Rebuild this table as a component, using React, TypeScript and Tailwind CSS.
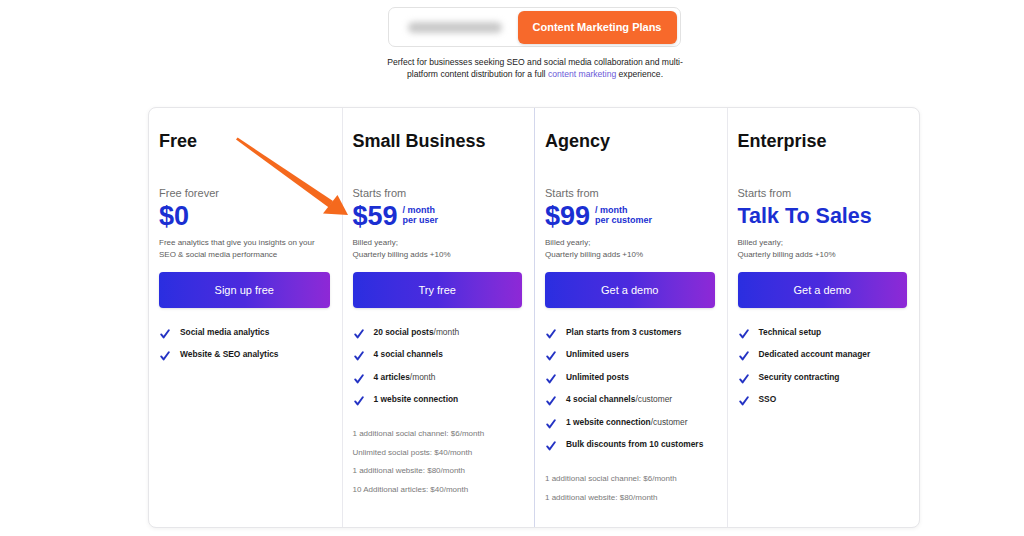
import React from "react";

const Check = () => (
  <svg width="10" height="10" viewBox="0 0 10 10" className="mt-[3px] shrink-0">
    <path d="M1.2 5.4 L3.6 8.4 L8.8 1.2" fill="none" stroke="#2433c4" strokeWidth="1.9" strokeLinecap="round" strokeLinejoin="round" />
  </svg>
);

type Feat = { b: string; n?: string };

type Plan = {
  name: string;
  label: string;
  price: React.ReactNode;
  note: React.ReactNode;
  cta: string;
  features: Feat[];
  extras?: string[];
};

const Billed = (
  <>
    Billed yearly;
    <br />
    Quarterly billing adds +10%
  </>
);

const plans: Plan[] = [
  {
    name: "Free",
    label: "Free forever",
    price: <span className="text-[27px] font-bold leading-[28px] text-[#1b2fd2]">$0</span>,
    note: (
      <>
        Free analytics that give you insights on your
        <br />
        SEO &amp; social media performance
      </>
    ),
    cta: "Sign up free",
    features: [{ b: "Social media analytics" }, { b: "Website & SEO analytics" }],
  },
  {
    name: "Small Business",
    label: "Starts from",
    price: (
      <div className="flex items-center gap-[5px]">
        <span className="text-[27px] font-bold leading-[28px] text-[#1b2fd2]">$59</span>
        <span className="text-[9px] font-bold leading-[10px] text-[#1b2fd2] mt-[-2px]">
          / month
          <br />
          per user
        </span>
      </div>
    ),
    note: Billed,
    cta: "Try free",
    features: [
      { b: "20 social posts", n: "/month" },
      { b: "4 social channels" },
      { b: "4 articles", n: "/month" },
      { b: "1 website connection" },
    ],
    extras: [
      "1 additional social channel: $6/month",
      "Unlimited social posts: $40/month",
      "1 additional website: $80/month",
      "10 Additional articles: $40/month",
    ],
  },
  {
    name: "Agency",
    label: "Starts from",
    price: (
      <div className="flex items-center gap-[5px]">
        <span className="text-[27px] font-bold leading-[28px] text-[#1b2fd2]">$99</span>
        <span className="text-[9px] font-bold leading-[10px] text-[#1b2fd2] mt-[-2px]">
          / month
          <br />
          per customer
        </span>
      </div>
    ),
    note: Billed,
    cta: "Get a demo",
    features: [
      { b: "Plan starts from 3 customers" },
      { b: "Unlimited users" },
      { b: "Unlimited posts" },
      { b: "4 social channels", n: "/customer" },
      { b: "1 website connection", n: "/customer" },
      { b: "Bulk discounts from 10 customers" },
    ],
    extras: ["1 additional social channel: $6/month", "1 additional website: $80/month"],
  },
  {
    name: "Enterprise",
    label: "Starts from",
    price: <span className="text-[21.5px] font-bold leading-[28px] text-[#1b2fd2]">Talk To Sales</span>,
    note: Billed,
    cta: "Get a demo",
    features: [
      { b: "Technical setup" },
      { b: "Dedicated account manager" },
      { b: "Security contracting" },
      { b: "SSO" },
    ],
  },
];

function Column({ p, idx }: { p: Plan; idx: number }) {
  const borderCls =
    idx === 0 ? "" : idx === 2 ? "border-l border-[#d3d7ec]" : "border-l border-[#e9e9ee]";
  return (
    <div className={`flex flex-col pl-[10px] pr-[12px] ${borderCls}`}>
      <div className="pt-[22px] text-[18px] font-bold leading-[22px] text-[#111]">{p.name}</div>
      <div className="mt-[35px] text-[11px] leading-[13px] text-[#6e6e6e]">{p.label}</div>
      <div className="mt-[2px] h-[28px] flex items-center">{p.price}</div>
      <div className="mt-[7px] text-[8px] leading-[12px] text-[#5c5c5c]">{p.note}</div>
      <button className="mt-[11px] h-[36px] w-full rounded-[4px] bg-linear-to-r from-[#2a2ee0] via-[#4c2ade] to-[#8e28d6] text-[11px] text-white shadow-sm">
        {p.cta}
      </button>
      <div className="mt-[18px] flex flex-col gap-[9.4px]">
        {p.features.map((f, i) => (
          <div key={i} className="flex items-start gap-[10px] pl-[1px]">
            <Check />
            <span className="text-[8.4px] leading-[12px] text-[#1a1a1a]">
              <span className="font-bold">{f.b}</span>
              {f.n && <span className="font-normal text-[#444]">{f.n}</span>}
            </span>
          </div>
        ))}
      </div>
      {p.extras && (
        <div className="mt-[22px] flex flex-col gap-[6.6px]">
          {p.extras.map((e, i) => (
            <div key={i} className="text-[8px] leading-[12px] text-[#7a7a7a]">
              {e}
            </div>
          ))}
        </div>
      )}
    </div>
  );
}

export default function App() {
  return (
    <div
      className="relative w-[1024px] h-[536px] bg-white overflow-hidden"
      style={{ fontFamily: '"Liberation Sans", Arial, Helvetica, sans-serif' }}
    >
      <div className="ml-[148px] w-[772px] pt-[7px]">
        <div className="flex justify-center">
          <div className="flex h-[40px] w-[293px] items-center rounded-[7px] border border-[#e2e2e2] bg-white p-[3px]">
            <div className="flex flex-1 items-center justify-center">
              <div className="h-[11px] w-[94px] rounded-full bg-[#c9c9c9] blur-[3px]" />
            </div>
            <div className="flex h-[33px] w-[159px] items-center justify-center rounded-[6px] bg-[#f7692b] text-[11px] font-bold text-white shadow-[0_1px_3px_rgba(0,0,0,0.15)]">
              Content Marketing Plans
            </div>
          </div>
        </div>
        <p className="mt-[9px] text-center text-[8.6px] leading-[12px] text-[#222] pl-[2px]">
          Perfect for businesses seeking SEO and social media collaboration and multi-
          <br />
          platform content distribution for a full{" "}
          <span className="text-[#6a5ad8]">content marketing</span> experience.
        </p>
        <div className="mt-[27px] grid h-[421px] grid-cols-4 rounded-[8px] border border-[#e6e6e9] bg-white shadow-[0_1px_4px_rgba(0,0,0,0.06)]">
          {plans.map((p, i) => (
            <Column key={p.name} p={p} idx={i} />
          ))}
        </div>
      </div>
      <svg className="pointer-events-none absolute left-0 top-0" width="1024" height="536">
        <polygon points="236,139.6 237.6,137.6 333,201 328.8,207.5" fill="#f5691d" />
        <polygon points="348,215 323,213.5 337.5,195" fill="#f5691d" />
      </svg>
    </div>
  );
}
